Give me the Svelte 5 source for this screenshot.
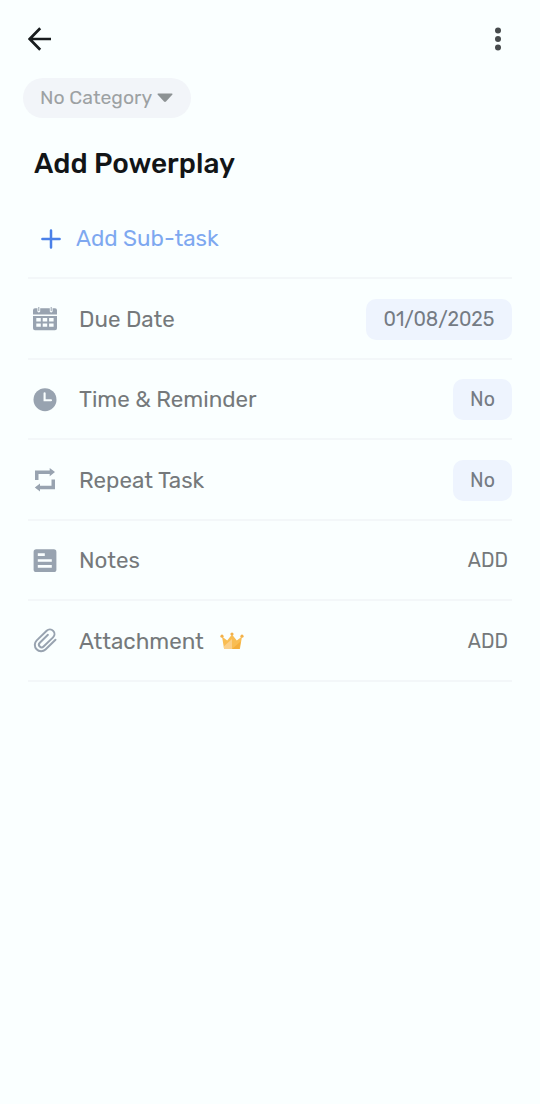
<script>
  const rows = [
    { icon: 'calendar', label: 'Due Date', value: '01/08/2025', pill: true },
    { icon: 'clock', label: 'Time & Reminder', value: 'No', pill: true },
    { icon: 'repeat', label: 'Repeat Task', value: 'No', pill: true },
    { icon: 'notes', label: 'Notes', value: 'ADD' },
    { icon: 'clip', label: 'Attachment', value: 'ADD', crown: true }
  ];
</script>

<main>
  <header>
    <svg width="24" height="24" viewBox="0 0 24 24" fill="none" stroke="#181c1e" stroke-width="2.7">
      <path d="M23 12H2M12.2 1.3 1.7 12l10.5 10.7" />
    </svg>
    <svg width="8" height="26" viewBox="0 0 8 26" fill="#474b4d">
      <circle cx="4" cy="4.5" r="3" /><circle cx="4" cy="13" r="3" /><circle cx="4" cy="21.5" r="3" />
    </svg>
  </header>

  <button class="category">
    <span>No Category</span>
    <svg width="16" height="10" viewBox="0 0 16 10"><path d="M1.2.5h13.6q1.3.2.4 1.3L9 8.6q-1 .9-2 0L.8 1.8Q-.1.7 1.2.5Z" fill="#8d9294" /></svg>
  </button>

  <h1>Add Powerplay</h1>

  <div class="subtask">
    <svg width="20" height="20" viewBox="0 0 20 20" stroke="#4a80e8" stroke-width="2.5" stroke-linecap="round">
      <path d="M10 1.4v17.2M1.4 10h17.2" />
    </svg>
    <span>Add Sub-task</span>
  </div>

  {#each rows as row}
    <div class="row">
      <svg class="icon" width="26" height="26" viewBox="0 0 26 26" fill="#98a3b0">
        {#if row.icon === 'calendar'}
          <path d="M3 2.2h2.4v3.3q1.4 2 2.8 0V2.2h9.6v3.3q1.4 2 2.8 0V2.2H23q2 0 2 2v4.2H1V4.2q0-2 2-2Z" />
          <path d="M6.8 1v4.1M19.2 1v4.1" stroke="#98a3b0" stroke-width="1" />
          <path fill-rule="evenodd" d="M1 9.9h24v12.3q0 2-2 2H3q-2 0-2-2ZM4.3 12.1v3.3h4.5v-3.3Zm6.4 0v3.3h4.5v-3.3Zm6.4 0v3.3h4.5v-3.3Zm-12.8 5.4v3.3h4.5v-3.3Zm6.4 0v3.3h4.5v-3.3Zm6.4 0v3.3h4.5v-3.3Z" />
        {:else if row.icon === 'clock'}
          <circle cx="13" cy="12.7" r="11.5" />
          <path d="M12.6 6.2v7H19" fill="none" stroke="#faffff" stroke-width="2.1" stroke-linecap="round" />
        {:else if row.icon === 'repeat'}
          <path d="M3 13V3.4h14.7V1l5.3 4.1-5.3 4.1V6.9H6.5V13Z" />
          <path d="M23 12.4v9.8H8v2.4l-5.2-4.1L8 16.4v2.3h11.5v-6.3Z" />
        {:else if row.icon === 'notes'}
          <rect x="1.6" y="1.3" width="22.8" height="22.8" rx="2.6" />
          <path d="M5.8 6.7h7M5.8 12.5h14M5.8 18.3h14" stroke="#faffff" stroke-width="2.7" />
        {:else}
          <g transform="rotate(46 13 13)" fill="none" stroke="#98a3b0" stroke-width="2" stroke-linecap="round">
            <path d="M19.4 4.6v13.9a6.3 6.3 0 0 1-12.6 0V4.7a4.6 4.6 0 0 1 9.2 0v13.2a2.7 2.7 0 0 1-5.4 0V6.6" />
          </g>
        {/if}
      </svg>
      <span class="label">{row.label}</span>
      {#if row.crown}
        <svg class="crown" width="24" height="18" viewBox="0 0 24 18">
          <path d="M2 4.4 7.2 8.4 12 2.4l4.8 6L22 4.4l-2.1 12.5H4.1Z" fill="#f9bd52" />
          <path d="M3.7 14.5 12 7v9.9H4.1Z" fill="#fbd08a" />
          <path d="m12 16.9 8.6-7.5-1.2 7.5Z" fill="#f4ae3c" />
          <g fill="#f3b14a"><circle cx="2" cy="4.2" r="1.6" /><circle cx="12" cy="2" r="1.6" /><circle cx="22" cy="4.2" r="1.6" /></g>
        </svg>
      {/if}
      <span class="value" class:pill={row.pill} class:date={row.icon === 'calendar'}>{row.value}</span>
    </div>
  {/each}
</main>

<style>
  :global(body) { background: #faffff; }
  main {
    box-sizing: border-box;
    min-height: 1104px;
    padding: 0 28px;
    background: #faffff;
    font-family: Rubik, Roboto, sans-serif;
    font-weight: 400;
    color: #75797b;
  }
  svg { display: block; flex: none; }
  header {
    display: flex;
    align-items: center;
    justify-content: space-between;
    height: 78.4px;
    padding-right: 10px;
  }
  .category {
    display: flex;
    align-items: center;
    box-sizing: border-box;
    width: 168px;
    height: 40px;
    margin: 0 0 0 -5px;
    padding: 0 0 0 17px;
    gap: 5px;
    border: 0;
    border-radius: 20px;
    background: #f2f5f9;
    color: #9da1a3;
    font: 400 19.4px/40px Rubik, Roboto, sans-serif;
  }
  .category span { width: 112px; white-space: nowrap; }
  h1 {
    margin: 25.6px 0 0 6px;
    font-size: 28px;
    line-height: 40px;
    font-weight: 500;
    color: #121517;
  }
  .subtask {
    display: flex;
    align-items: center;
    gap: 16px;
    box-sizing: border-box;
    height: 95.5px;
    padding: 16px 0 0 12.5px;
    border-bottom: 2px solid #f3f7f9;
    color: #7ea8f0;
    font-size: 22.45px;
  }
  .subtask span { margin-left: -.5px; }
  .row {
    display: flex;
    align-items: center;
    box-sizing: border-box;
    height: 80.5px;
    padding: .6px 0 0 4px;
    border-bottom: 2px solid #f3f7f9;
  }
  .label { margin-left: 21px; font-size: 22.4px; white-space: nowrap; }
  .crown { margin-left: 16px; }
  .value { margin-left: auto; padding-right: 4px; font-size: 19.6px; }
  .pill {
    box-sizing: border-box;
    width: 59px;
    height: 41px;
    padding: 0;
    border-radius: 10px;
    background: #eef4fe;
    line-height: 41px;
    text-align: center;
    color: #757b84;
  }
  .date { width: 146px; }
</style>
